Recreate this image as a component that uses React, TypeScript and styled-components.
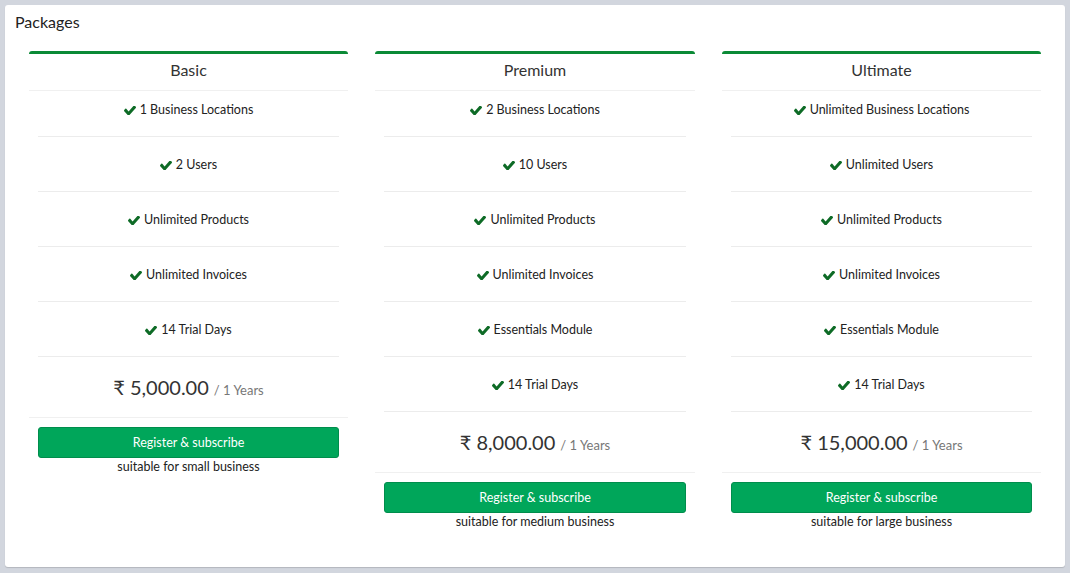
import React from "react";
import styled, { createGlobalStyle } from "styled-components";

const Global = createGlobalStyle`
  html, body { margin: 0; padding: 0; background: #d2d6de; }
  body { font-family: "Lato", "Liberation Sans", sans-serif; color: #333; }
  * { box-sizing: border-box; }
`;

const Page = styled.div`
  padding: 5px 5px 6px 5px;
  height: 573px;
`;

const Box = styled.div`
  background: #fff;
  border-radius: 3px;
  box-shadow: 0 1px 1px rgba(0, 0, 0, 0.15);
  height: 562px;
  display: flex;
  flex-direction: column;
`;

const BoxHeader = styled.div`
  padding: 7px 10px 0 10px;
  height: 46px;
`;

const Title = styled.h3`
  margin: 0;
  font-size: 16px;
  font-weight: 400;
  line-height: 20px;
  color: #222;
`;

const Grid = styled.div`
  display: grid;
  grid-template-columns: 319px 320px 319px;
  column-gap: 27px;
  padding: 0 24px;
  align-items: start;
`;

const Card = styled.div`
  border-top: 3px solid #0b8a36;
  border-radius: 3px 3px 0 0;
  background: #fff;
`;

const CardHeader = styled.div`
  height: 37px;
  padding-bottom: 5px;
  display: flex;
  align-items: center;
  justify-content: center;
  font-size: 16px;
  color: #333;
  border-bottom: 1px solid #f0f0f0;
`;

const Features = styled.ul`
  list-style: none;
  margin: 0;
  padding: 0 9px;
`;

const Feature = styled.li`
  padding: 19px 0 17px;
  line-height: 18px;
  font-size: 12.5px;
  text-align: center;
  color: #222;
  border-bottom: 1px solid #ececec;
  display: flex;
  justify-content: center;
  align-items: center;
  gap: 4px;
  &:first-child {
    padding-top: 10px;
  }
`;

const Check = styled.svg`
  width: 12px;
  height: 9px;
  fill: #0e6b26;
  flex: none;
`;

const PriceRow = styled.div`
  height: 61px;
  padding-top: 18px;
  display: flex;
  justify-content: center;
  align-items: baseline;
  gap: 5px;
  border-bottom: 1px solid #f0f0f0;
`;

const Amount = styled.span`
  font-size: 20px;
  line-height: 24px;
  color: #333;
`;

const Period = styled.span`
  font-size: 13px;
  line-height: 16px;
  color: #777;
`;

const CardFooter = styled.div`
  padding: 9px 9px 10px;
  text-align: center;
`;

const Button = styled.button`
  display: block;
  width: 100%;
  height: 31px;
  background: #00a65a;
  border: 1px solid #008d4c;
  border-radius: 3px;
  color: #fff;
  font-family: inherit;
  font-size: 12.5px;
  cursor: pointer;
`;

const Note = styled.div`
  font-size: 12.5px;
  line-height: 18px;
  color: #222;
`;

type Pkg = {
  name: string;
  features: string[];
  price: string;
  note: string;
};

const packages: Pkg[] = [
  {
    name: "Basic",
    features: [
      "1 Business Locations",
      "2 Users",
      "Unlimited Products",
      "Unlimited Invoices",
      "14 Trial Days",
    ],
    price: "₹ 5,000.00",
    note: "suitable for small business",
  },
  {
    name: "Premium",
    features: [
      "2 Business Locations",
      "10 Users",
      "Unlimited Products",
      "Unlimited Invoices",
      "Essentials Module",
      "14 Trial Days",
    ],
    price: "₹ 8,000.00",
    note: "suitable for medium business",
  },
  {
    name: "Ultimate",
    features: [
      "Unlimited Business Locations",
      "Unlimited Users",
      "Unlimited Products",
      "Unlimited Invoices",
      "Essentials Module",
      "14 Trial Days",
    ],
    price: "₹ 15,000.00",
    note: "suitable for large business",
  },
];

const CheckIcon = () => (
  <Check viewBox="121 400 1550 1030" preserveAspectRatio="none">
    <path d="M1671 566q0 40-28 68l-724 724-136 136q-28 28-68 28t-68-28l-136-136-362-362q-28-28-28-68t28-68l136-136q28-28 68-28t68 28l294 295 656-657q28-28 68-28t68 28l136 136q28 28 28 68z" />
  </Check>
);

export default function App() {
  return (
    <>
      <Global />
      <Page>
        <Box>
          <BoxHeader>
            <Title>Packages</Title>
          </BoxHeader>
          <Grid>
            {packages.map((p) => (
              <Card key={p.name}>
                <CardHeader>{p.name}</CardHeader>
                <Features>
                  {p.features.map((f) => (
                    <Feature key={f}>
                      <CheckIcon />
                      <span>{f}</span>
                    </Feature>
                  ))}
                </Features>
                <PriceRow>
                  <Amount>{p.price}</Amount>
                  <Period>/ 1 Years</Period>
                </PriceRow>
                <CardFooter>
                  <Button>Register &amp; subscribe</Button>
                  <Note>{p.note}</Note>
                </CardFooter>
              </Card>
            ))}
          </Grid>
        </Box>
      </Page>
    </>
  );
}
